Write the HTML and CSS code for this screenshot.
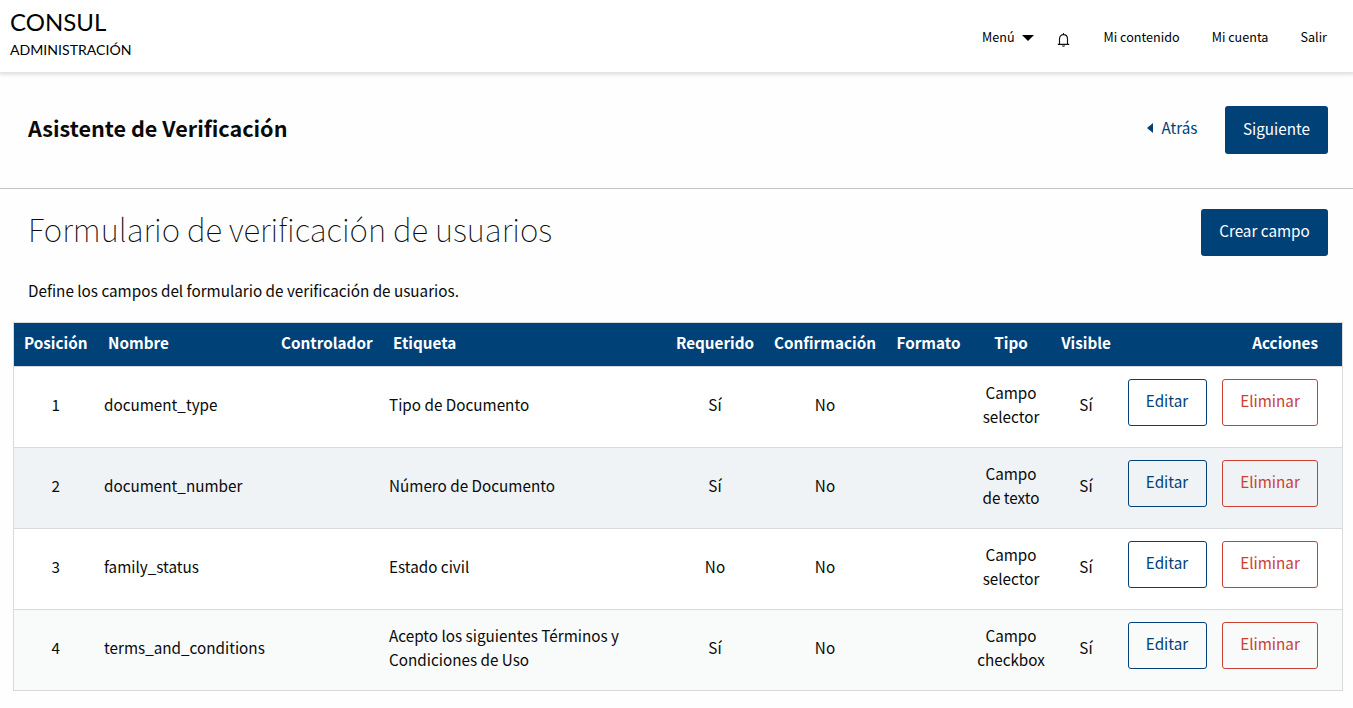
FILE: index.html
```
<!DOCTYPE html>
<html lang="es">
<head>
<meta charset="utf-8">
<title>Asistente de Verificación</title>
<link rel="stylesheet" href="styles.css">
</head>
<body>
<header class="topbar">
  <div class="brand"><span class="brand-name">CONSUL</span><span class="brand-sub">ADMINISTRACIÓN</span></div>
  <nav class="nav">
    <a class="nav-menu">Menú <span class="caret"></span></a>
    <a class="bell"><svg width="13" height="16" viewBox="0 0 13 16" fill="none" stroke="#111" stroke-width="1.15"><path d="M.8 12.4H12.2M2.5 12.2V7C2.5 4.3 4.1 2.6 6.5 2.6S10.5 4.3 10.5 7V12.2M6.5 1V2.6M5.3 13.6Q6.5 14.8 7.7 13.6"/></svg></a>
    <a>Mi contenido</a>
    <a>Mi cuenta</a>
    <a>Salir</a>
  </nav>
</header>
<section class="wizard">
  <h2 class="wizard-title">Asistente de Verificación</h2>
  <div class="wizard-actions"><a class="back"><span class="back-arrow"></span>Atrás</a><a class="button next">Siguiente</a></div>
</section>
<main class="content">
  <div class="page-head"><h1 class="page-title">Formulario de verificación de usuarios</h1><a class="button create">Crear campo</a></div>
  <p class="intro">Define los campos del formulario de verificación de usuarios.</p>
  <table class="fields">
    <colgroup><col class="c-pos"><col class="c-name"><col class="c-ctrl"><col class="c-label"><col class="c-req"><col class="c-conf"><col class="c-format"><col class="c-type"><col class="c-vis"><col></colgroup>
    <thead><tr><th class="center">Posición</th><th>Nombre</th><th>Controlador</th><th>Etiqueta</th><th class="center">Requerido</th><th class="center">Confirmación</th><th class="center">Formato</th><th class="center">Tipo</th><th class="center">Visible</th><th class="right">Acciones</th></tr></thead>
    <tbody>
      <tr><td class="center">1</td><td>document_type</td><td></td><td>Tipo de Documento</td><td class="center">Sí</td><td class="center">No</td><td></td><td class="center">Campo<br>selector</td><td class="center">Sí</td><td class="cell-actions"><div class="actions"><a class="outline edit">Editar</a><a class="outline delete">Eliminar</a></div></td></tr>
      <tr class="hover"><td class="center">2</td><td>document_number</td><td></td><td>Número de Documento</td><td class="center">Sí</td><td class="center">No</td><td></td><td class="center">Campo<br>de texto</td><td class="center">Sí</td><td class="cell-actions"><div class="actions"><a class="outline edit">Editar</a><a class="outline delete">Eliminar</a></div></td></tr>
      <tr><td class="center">3</td><td>family_status</td><td></td><td>Estado civil</td><td class="center">No</td><td class="center">No</td><td></td><td class="center">Campo<br>selector</td><td class="center">Sí</td><td class="cell-actions"><div class="actions"><a class="outline edit">Editar</a><a class="outline delete">Eliminar</a></div></td></tr>
      <tr class="even"><td class="center">4</td><td>terms_and_conditions</td><td></td><td>Acepto los siguientes Términos y<br>Condiciones de Uso</td><td class="center">Sí</td><td class="center">No</td><td></td><td class="center">Campo<br>checkbox</td><td class="center">Sí</td><td class="cell-actions"><div class="actions"><a class="outline edit">Editar</a><a class="outline delete">Eliminar</a></div></td></tr>
    </tbody>
  </table>
</main>
</body>
</html>
```
FILE: styles.css
```
* { box-sizing: border-box; }
body { margin: 0; height: 708px; overflow: hidden; background: #fefefe; color: #0a0a0a; font: 400 15.25px/24px "Noto Sans CJK SC", "Open Sans", sans-serif; }
h1, h2, p { margin: 0; }
.topbar { display: flex; justify-content: space-between; height: 72px; padding: 7px 26px 0 10px; background: #fff; color: #000; box-shadow: 0 2px 3px 1px rgba(0,0,0,.11); }
.brand { display: flex; flex-direction: column; font-family: Lato, sans-serif; }
.brand-name { font-size: 24px; line-height: 30px; }
.brand-sub { padding-top: 1px; font-size: 14.1px; line-height: 24px; }
.nav { display: flex; align-items: flex-start; padding-top: 18px; gap: 32px; font-size: 12.6px; }
.nav-menu { display: flex; align-items: center; gap: 7px; }
.caret { margin-top: 1px; border: 6px solid transparent; border-top-color: #000; border-bottom: 0; }
.bell { display: flex; padding-top: 7px; margin: 0 2px 0 -9px; }
.wizard { display: flex; justify-content: space-between; height: 117px; padding: 34px 25px 0 28px; border-bottom: 1px solid #c0c4c2; }
.wizard-title { font-size: 21.6px; font-weight: 700; line-height: 44px; }
.wizard-actions { display: flex; gap: 27.6px; }
.back { display: flex; align-items: center; gap: 8px; height: 42px; color: #004178; }
.back-arrow { margin-top: 2px; border: 5px solid transparent; border-right: 6px solid #004178; border-left: 0; }
.button { display: block; height: 48px; border-radius: 3px; background: #004178; color: #fefefe; line-height: 44px; text-align: center; }
.next { width: 103px; }
.create { width: 127px; height: 47px; line-height: 43px; }
.content { padding: 20px 10px 0 13px; }
.page-head { display: flex; justify-content: space-between; padding: 0 15px; }
.page-title { font-size: 31.3px; font-weight: 100; line-height: 40px; }
.intro { padding: 22px 15px 0; margin-bottom: 20px; height: 46px; }
.fields { width: 1330px; table-layout: fixed; border-collapse: collapse; border: 1px solid #d9dadc; }
.c-pos { width: 85px; } .c-name { width: 173px; } .c-ctrl { width: 112px; } .c-label { width: 283px; }
.c-req { width: 98px; } .c-conf { width: 122px; } .c-format { width: 85px; } .c-type { width: 80px; } .c-vis { width: 70px; }
th { height: 44px; padding: 0 9px 5px 9.5px; background: #004178; color: #fff; font-weight: 700; text-align: left; white-space: nowrap; }
td { height: 81px; padding: 0 5px 7px 5.5px; background: #fff; border-top: 1px solid #d9dadc; white-space: nowrap; }
th.center { text-align: center; padding: 0 1px 5px 0; }
td.center { text-align: center; padding: 0 1px 7px 0; }
th.right { text-align: right; padding-right: 24px; }
td.cell-actions { padding: 0 0 0 6px; }
.hover td { background: #eff3f6; }
.even td { background: #f9fafa; }
.actions { display: flex; gap: 15px; padding-bottom: 9px; }
.outline { height: 47px; border: 1px solid; border-radius: 3px; line-height: 41px; text-align: center; }
.edit { width: 79px; color: #004178; }
.delete { width: 96px; padding-left: 1px; color: #cc4033; }
```
